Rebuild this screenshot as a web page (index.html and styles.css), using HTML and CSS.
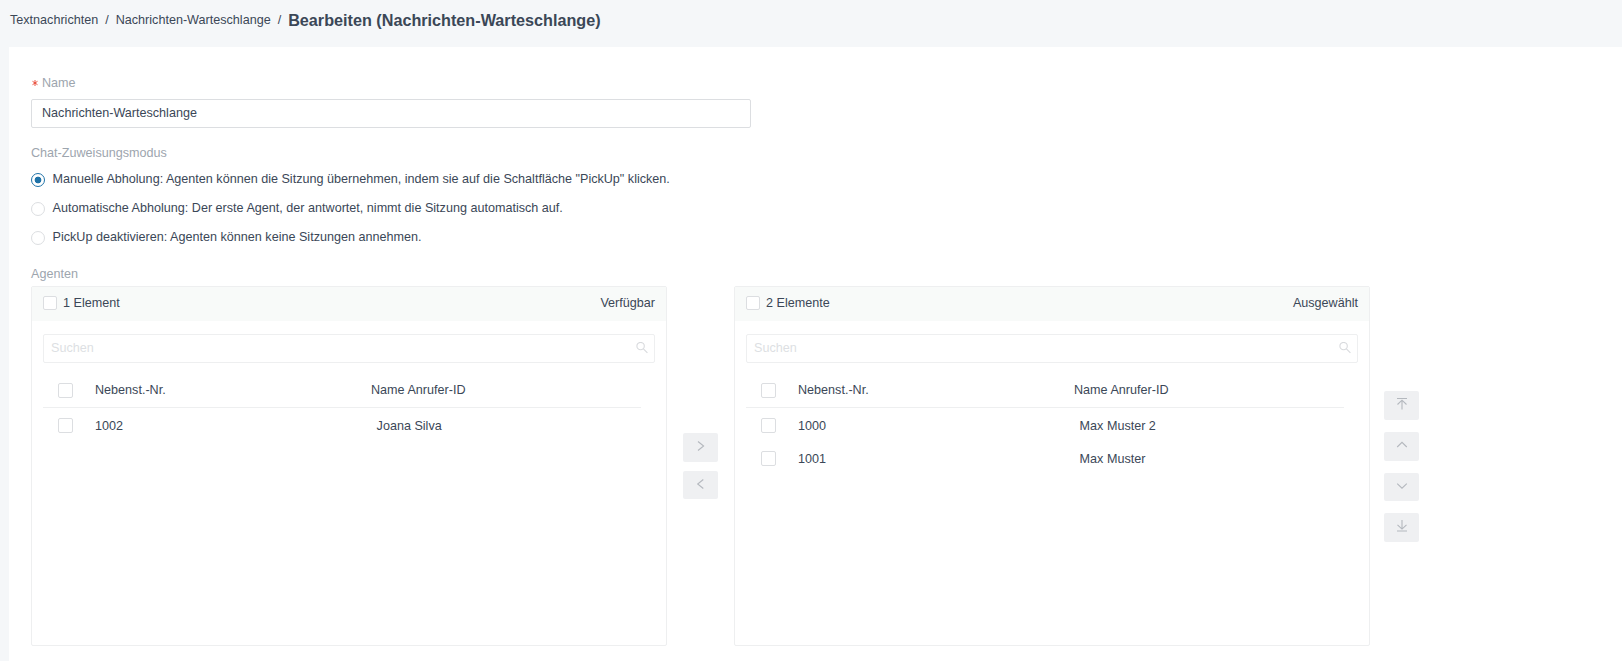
FILE: index.html
```html
<!DOCTYPE html>
<html lang="de">
<head>
  <meta charset="UTF-8">
  <meta name="viewport" content="width=device-width, initial-scale=1.0">
  <title>Bearbeiten (Nachrichten-Warteschlange)</title>
  <link rel="stylesheet" href="styles.css">
</head>

<body>
  <nav class="breadcrumb">
    <span>Textnachrichten</span>
    <span class="sep">/</span>
    <span>Nachrichten-Warteschlange</span>
    <span class="sep">/</span>
    <h1>Bearbeiten (Nachrichten-Warteschlange)</h1>
  </nav>

  <main class="content">
    <label class="label" for="name">
      <svg class="required" viewBox="0 0 6 6"><path d="M3 0v6M0.5 1.3l5 3.4M5.5 1.3l-5 3.4"/></svg>
      Name
    </label>
    <input class="name-input" type="text" id="name" value="Nachrichten-Warteschlange">

    <div class="label mode-label">Chat-Zuweisungsmodus</div>
    <div class="radios">
      <label class="radio"><input type="radio" name="mode" checked><span>Manuelle Abholung: Agenten können die Sitzung übernehmen, indem sie auf die Schaltfläche "PickUp" klicken.</span></label>
      <label class="radio"><input type="radio" name="mode"><span>Automatische Abholung: Der erste Agent, der antwortet, nimmt die Sitzung automatisch auf.</span></label>
      <label class="radio"><input type="radio" name="mode"><span>PickUp deaktivieren: Agenten können keine Sitzungen annehmen.</span></label>
    </div>

    <div class="label agents-label">Agenten</div>
    <div class="transfer">
      <section class="panel">
        <header class="panel-header">
          <input type="checkbox" class="check">
          <span>1 Element</span>
          <span class="panel-title">Verfügbar</span>
        </header>
        <div class="search">
          <input type="text" placeholder="Suchen">
          <svg class="search-icon" viewBox="0 0 12 12"><circle cx="4.6" cy="4.1" r="3.7"/><path d="M7.4 6.9l4 4"/></svg>
        </div>
        <div class="row row-head">
          <input type="checkbox" class="check">
          <span>Nebenst.-Nr.</span>
          <span>Name Anrufer-ID</span>
        </div>
        <div class="row">
          <input type="checkbox" class="check">
          <span>1002</span>
          <span class="caller">Joana Silva</span>
        </div>
      </section>

      <div class="move">
        <button class="btn" disabled><svg viewBox="0 0 12 12"><path d="M3 1.5L8.6 6 3 10.5"/></svg></button>
        <button class="btn short" disabled><svg viewBox="0 0 12 12"><path d="M8.3 1.5L2.7 6l5.6 4.5"/></svg></button>
      </div>

      <section class="panel">
        <header class="panel-header">
          <input type="checkbox" class="check">
          <span>2 Elemente</span>
          <span class="panel-title">Ausgewählt</span>
        </header>
        <div class="search">
          <input type="text" placeholder="Suchen">
          <svg class="search-icon" viewBox="0 0 12 12"><circle cx="4.6" cy="4.1" r="3.7"/><path d="M7.4 6.9l4 4"/></svg>
        </div>
        <div class="row row-head">
          <input type="checkbox" class="check">
          <span>Nebenst.-Nr.</span>
          <span>Name Anrufer-ID</span>
        </div>
        <div class="row">
          <input type="checkbox" class="check">
          <span>1000</span>
          <span class="caller">Max Muster 2</span>
        </div>
        <div class="row">
          <input type="checkbox" class="check">
          <span>1001</span>
          <span class="caller">Max Muster</span>
        </div>
      </section>

      <div class="sort">
        <button class="btn" disabled><svg viewBox="0 0 12 12"><path d="M1 0.5h10M6 11.5V2.5M1.5 6.5L6 2.2l4.5 4.3"/></svg></button>
        <button class="btn" disabled><svg viewBox="0 0 12 12"><path d="M1.2 8L6 3.3 10.8 8"/></svg></button>
        <button class="btn short" disabled><svg viewBox="0 0 12 12"><path d="M1.2 3.7L6 8.2l4.8-4.5"/></svg></button>
        <button class="btn" disabled><svg viewBox="0 0 12 12"><path d="M1 11h10M6 0v9M1.5 4.8L6 9.1l4.5-4.3"/></svg></button>
      </div>
    </div>
  </main>
</body>
</html>
```
FILE: styles.css
```css
* {
  box-sizing: border-box;
}

body {
  margin: 0;
  background-color: #f5f7f9;
  color: #3b4757;
  font-family: "Liberation Sans", Arial, sans-serif;
  font-size: 12.6px;
  height: 661px;
  overflow: hidden;
}

input, button {
  font-family: inherit;
  font-size: inherit;
  color: inherit;
  margin: 0;
}

.breadcrumb {
  display: flex;
  align-items: center;
  height: 47px;
  padding: 0 0 7px 10px;
}

.breadcrumb .sep {
  margin: 0 7px;
}

.breadcrumb h1 {
  margin: 0;
  font-size: 16.2px;
  font-weight: bold;
  line-height: 20px;
}

.content {
  margin-left: 9px;
  padding: 26px 22px 0;
  height: 614px;
  background-color: #fff;
}

.label {
  display: flex;
  align-items: center;
  height: 20px;
  color: #9da5ae;
}

.required {
  width: 6px;
  height: 6px;
  margin: 0 4px 0 1px;
  fill: none;
  stroke: #e8422f;
  stroke-width: 0.9;
}

.name-input {
  display: block;
  width: 720px;
  height: 29px;
  margin-top: 6px;
  padding: 0 10px 1px;
  border: 1px solid #dcdee1;
  border-radius: 2px;
  outline: none;
}

.mode-label {
  margin-top: 15px;
}

.radios {
  margin-top: 2px;
}

.radio {
  display: flex;
  align-items: center;
  height: 29px;
}

.radio span {
  margin-left: 7.5px;
  padding-bottom: 2px;
}

.radio input {
  appearance: none;
  width: 14px;
  height: 14px;
  border: 1px solid #dcdee1;
  border-radius: 50%;
}

.radio input:checked {
  border-color: #1f73a8;
  background: radial-gradient(circle, #1f73a8 3px, #fff 3.7px);
}

.agents-label {
  margin-top: 12px;
}

.transfer {
  display: flex;
  align-items: flex-start;
  height: 360px;
  margin-top: 2px;
}

.panel {
  width: 636px;
  height: 360px;
  border: 1px solid #eeeff0;
  border-radius: 2px;
}

.panel-header {
  display: flex;
  align-items: center;
  height: 34px;
  padding: 0 11px 2px;
  background-color: #f8faf9;
}

.panel-header .check {
  margin-right: 6px;
}

.panel-title {
  margin-left: auto;
}

.check {
  appearance: none;
  width: 14px;
  height: 14px;
  border: 1px solid #dcdee1;
  border-radius: 2px;
  background-color: #fff;
}

.search {
  display: flex;
  align-items: center;
  height: 29px;
  margin: 13px 11px 0;
  padding: 0 6px 1px 7px;
  border: 1px solid #eeeff0;
  border-radius: 2px;
}

.search input {
  flex: 1;
  padding: 0;
  border: none;
  outline: none;
}

.search input::placeholder {
  color: #dddfe3;
}

.search-icon {
  width: 12px;
  height: 12px;
  fill: none;
  stroke: #d8dadd;
  stroke-width: 1.1;
}

.row {
  display: grid;
  grid-template-columns: 37px 276px 1fr;
  align-items: center;
  width: 598px;
  height: 33px;
  margin-left: 11px;
  padding-left: 15px;
}

.row-head {
  height: 35px;
  margin-top: 10px;
  margin-bottom: 1px;
  border-bottom: 1px solid #eeeff0;
}

.row .check {
  width: 15px;
  height: 15px;
}

.caller {
  padding-left: 5.6px;
}

.move {
  display: flex;
  flex-direction: column;
  gap: 9px;
  margin: 147px 16px 0;
}

.sort {
  display: flex;
  flex-direction: column;
  gap: 12px;
  margin: 105px 0 0 14px;
}

.btn {
  display: flex;
  justify-content: center;
  align-items: center;
  width: 35px;
  height: 29px;
  padding: 0 0 3px;
  border: none;
  border-radius: 2px;
  background-color: #eff0f2;
}

.btn.short {
  height: 28px;
}

.btn svg {
  width: 12px;
  height: 12px;
  fill: none;
  stroke: #b4b8be;
  stroke-width: 1.1;
}
```
